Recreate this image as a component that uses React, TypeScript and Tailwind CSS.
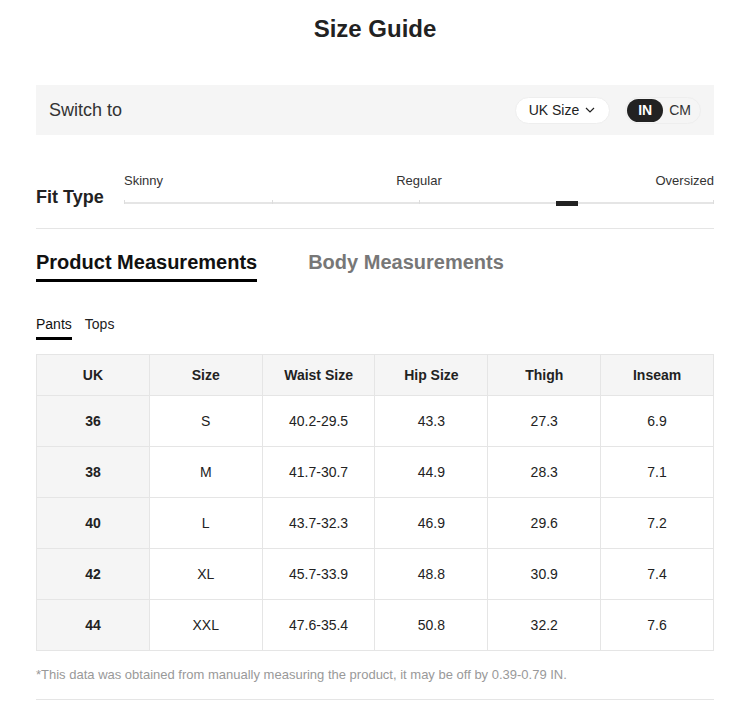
import React from "react";

const rows = [
  ["36", "S", "40.2-29.5", "43.3", "27.3", "6.9"],
  ["38", "M", "41.7-30.7", "44.9", "28.3", "7.1"],
  ["40", "L", "43.7-32.3", "46.9", "29.6", "7.2"],
  ["42", "XL", "45.7-33.9", "48.8", "30.9", "7.4"],
  ["44", "XXL", "47.6-35.4", "50.8", "32.2", "7.6"],
];
const headers = ["UK", "Size", "Waist Size", "Hip Size", "Thigh", "Inseam"];

export default function App() {
  return (
    <div className="w-[748px] min-h-[724px] bg-white pl-[36px] pr-[34px] text-[#222]" style={{ fontFamily: '"Liberation Sans", Arial, sans-serif' }}>
      <h1 className="pt-[15px] text-center text-[24px] font-bold leading-[28px] text-[#222]">Size Guide</h1>

      <div className="mt-[42px] flex h-[50px] items-center justify-between bg-[#f5f5f5] pl-[13px] pr-[13px]">
        <span className="text-[18px] text-[#333]">Switch to</span>
        <div className="flex items-center gap-[15px]">
          <div className="flex h-[27px] items-center gap-[6px] rounded-full border border-[#eee] bg-white pl-[13px] pr-[14px] text-[14px] text-[#222]">
            <span>UK Size</span>
            <svg width="10" height="6" viewBox="0 0 10 6" fill="none" stroke="#222" strokeWidth="1.2"><path d="M1 1l4 4 4-4" /></svg>
          </div>
          <div className="flex h-[27px] items-center rounded-full border border-[#eee] bg-[#f5f5f5] p-[1px] pr-[9px] text-[14px]">
            <span className="flex h-[23px] w-[36px] items-center justify-center rounded-full bg-[#222] font-bold text-white">IN</span>
            <span className="ml-[6px] text-[#333]">CM</span>
          </div>
        </div>
      </div>

      <div className="mt-[36px] flex items-end border-b border-[#e5e5e5] pb-[22px]">
        <div className="relative top-[2px] w-[88px] text-[18px] font-bold leading-[22px] text-[#222]">Fit Type</div>
        <div className="flex-1">
          <div className="relative h-[20px] text-[13px] text-[#333]">
            <span className="absolute left-0 top-0">Skinny</span>
            <span className="absolute left-1/2 top-0 -translate-x-1/2">Regular</span>
            <span className="absolute right-0 top-0">Oversized</span>
          </div>
          <div className="relative mt-[9px] h-[6px]">
            <div className="absolute left-0 right-0 top-[2px] h-[2px] bg-[#e5e5e5]" />
            <div className="absolute left-0 top-0 h-[4px] w-[1px] bg-[#ddd]" />
            <div className="absolute left-1/4 top-0 h-[4px] w-[1px] bg-[#ddd]" />
            <div className="absolute left-1/2 top-0 h-[4px] w-[1px] bg-[#ddd]" />
            <div className="absolute right-0 top-0 h-[4px] w-[1px] bg-[#ddd]" />
            <div className="absolute left-[432px] top-[1px] h-[5px] w-[22px] bg-[#222]" />
          </div>
        </div>
      </div>

      <div className="mt-[21px] flex gap-[51px] text-[20px] font-bold leading-[24px]">
        <div>
          <div className="text-[#111]">Product Measurements</div>
          <div className="mt-[5px] h-[3px] bg-[#000]" />
        </div>
        <div className="text-[#777]">Body Measurements</div>
      </div>

      <div className="mt-[34px] flex gap-[13px] text-[14px] leading-[17px]">
        <div>
          <div className="text-[#111]">Pants</div>
          <div className="mt-[4px] h-[3px] bg-[#000]" />
        </div>
        <div className="text-[#222]">Tops</div>
      </div>

      <table className="mt-[14px] w-[678px] table-fixed border-collapse text-[14px] text-[#222]">
        <thead>
          <tr className="h-[41px] bg-[#f5f5f5]">
            {headers.map((h) => (
              <th key={h} className="border border-[#e5e5e5] font-bold">{h}</th>
            ))}
          </tr>
        </thead>
        <tbody>
          {rows.map((r) => (
            <tr key={r[0]} className="h-[51px]">
              {r.map((c, i) => (
                <td key={i} className={"border border-[#e5e5e5] text-center " + (i === 0 ? "bg-[#f5f5f5] font-bold" : "bg-white")}>{c}</td>
              ))}
            </tr>
          ))}
        </tbody>
      </table>

      <p className="mt-[15px] border-b border-[#e5e5e5] pb-[16px] text-[13px] leading-[17px] text-[#999]">
        *This data was obtained from manually measuring the product, it may be off by 0.39-0.79 IN.
      </p>
    </div>
  );
}
